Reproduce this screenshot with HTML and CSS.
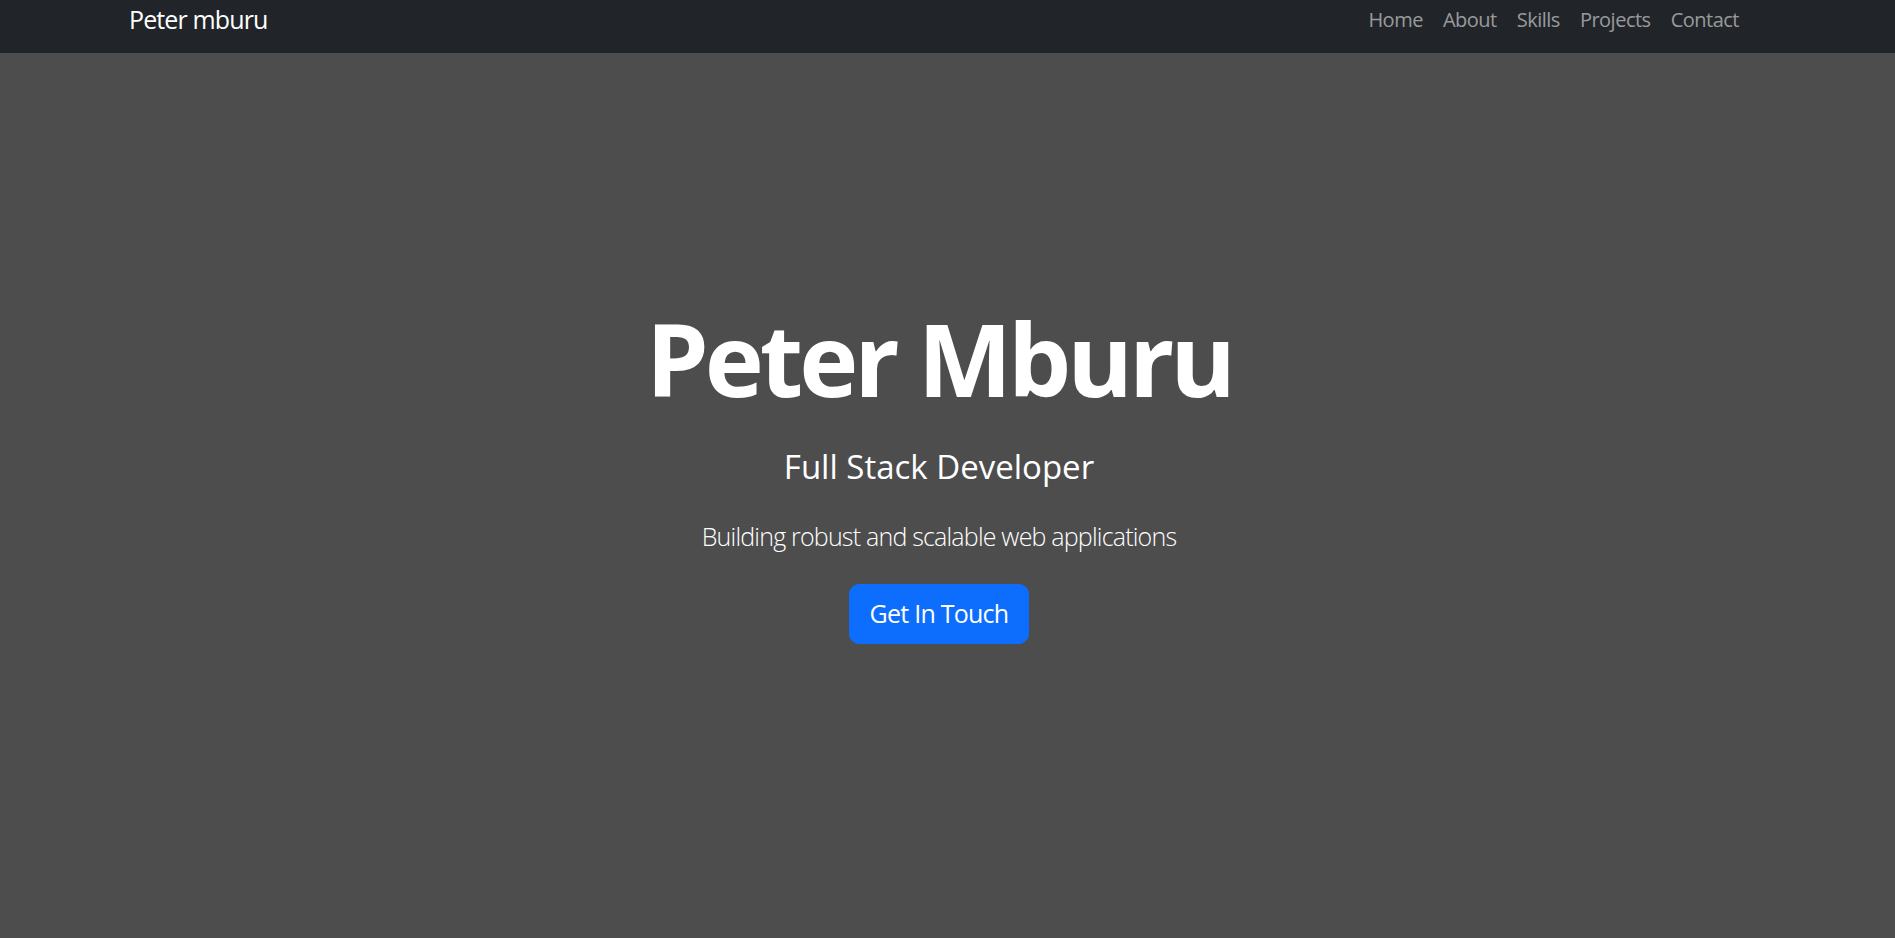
FILE: index.html
```html
<!DOCTYPE html>
<html lang="en">
<head>
<meta charset="utf-8">
<title>Peter Mburu</title>
<link rel="stylesheet" href="styles.css">
</head>
<body>
<nav class="navbar">
  <div class="nav-inner">
    <a class="brand" href="#">Peter mburu</a>
    <ul class="nav-links">
      <li><a href="#">Home</a></li>
      <li><a href="#">About</a></li>
      <li><a href="#">Skills</a></li>
      <li><a href="#">Projects</a></li>
      <li><a href="#">Contact</a></li>
    </ul>
  </div>
</nav>
<section class="hero">
  <h1 class="hero-title">Peter Mburu</h1>
  <h3 class="hero-sub">Full Stack Developer</h3>
  <p class="hero-lead">Building robust and scalable web applications</p>
  <a class="btn-primary" href="#">Get In Touch</a>
</section>
</body>
</html>
```
FILE: styles.css
```css
*, *::before, *::after {
  box-sizing: border-box;
}
html, body {
  margin: 0;
  padding: 0;
}
body {
  font-family: "Open Sans", "Noto Sans", sans-serif;
  background: #4d4d4d;
  color: #fff;
  height: 938px;
  overflow: hidden;
}
a { text-decoration: none; }

.navbar {
  background: #212529;
  height: 53px;
  padding-right: 17px;
}
.nav-inner {
  max-width: 1650px;
  margin: 0 auto;
  padding: 0 15px;
  display: flex;
  justify-content: space-between;
  align-items: flex-start;
  height: 53px;
}
.brand {
  font-size: 25px;
  line-height: 37.5px;
  margin-top: 1px;
  letter-spacing: -0.035em;
  color: #fff;
}
.nav-links {
  list-style: none;
  margin: 0;
  padding: 0;
  display: flex;
  margin-top: 5px;
}
.nav-links a {
  display: block;
  font-size: 20px;
  line-height: 30px;
  padding: 0 10px;
  letter-spacing: -0.025em;
  color: rgba(255, 255, 255, 0.55);
}

.hero {
  display: flex;
  flex-direction: column;
  align-items: center;
  padding: 245px 17px 0 0;
  text-align: center;
}
.hero-title {
  margin: 0;
  font-size: 100px;
  line-height: 120px;
  font-weight: 700;
  letter-spacing: -0.04em;
}
.hero-sub {
  margin: 29px 0 0;
  font-size: 33px;
  line-height: 39.6px;
  font-weight: 400;
}
.hero-lead {
  margin: 31px 0 0;
  font-size: 25px;
  line-height: 37.5px;
  font-weight: 300;
  letter-spacing: -0.032em;
}
.btn-primary {
  margin-top: 29px;
  display: inline-block;
  background: #0d6efd;
  border: 1.25px solid #0d6efd;
  border-radius: 10px;
  padding: 10px 20px;
  font-size: 25px;
  line-height: 37.5px;
  letter-spacing: -0.03em;
  color: #fff;
}
```
